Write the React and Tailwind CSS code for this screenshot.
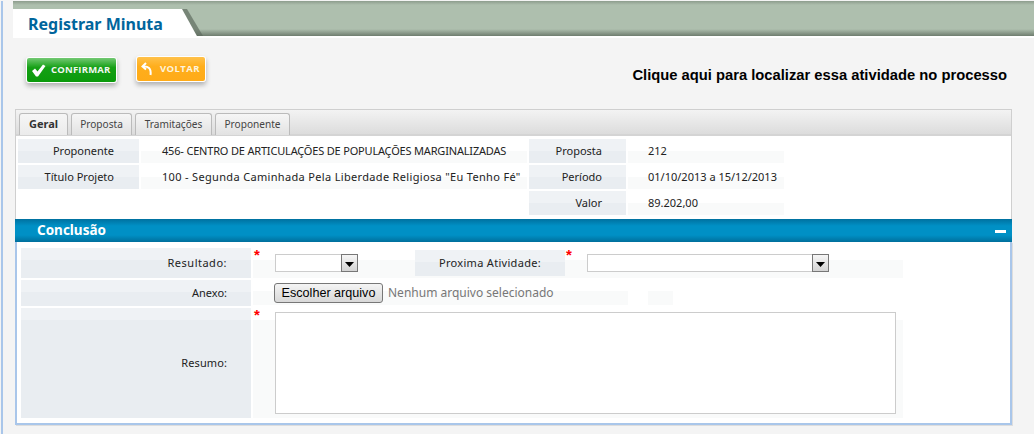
import React from 'react';

const FONT = "font-['Noto_Sans',sans-serif] text-[#222]";
const TEXT = `${FONT} text-[11px]`;
const LABEL_BG = 'bg-[linear-gradient(#eff2f5_12px,#e9edf1_12px)]';
const VALUE_BG = 'bg-[linear-gradient(#ffffff_12px,#f9fafa_12px)]';

const TABS = [
  { label: 'Geral', width: 'w-[49px]', active: true },
  { label: 'Proposta', width: 'w-[61px]' },
  { label: 'Tramitações', width: 'w-[77px]' },
  { label: 'Proponente', width: 'w-[75px]' },
];

function InfoRow({ label, value, valueClass, label2, value2, empty }) {
  return (
    <div className={`flex gap-[2px] h-[24px] ${TEXT}`}>
      <div className={`w-[121px] pr-[25px] flex items-center justify-end ${empty ? '' : LABEL_BG}`}>{label}</div>
      <div className={`w-[386px] pl-[21px] flex items-center ${valueClass || ''} ${empty ? '' : VALUE_BG}`}>{value}</div>
      <div className={`w-[97px] pr-[24px] flex items-center justify-end ${LABEL_BG}`}>{label2}</div>
      <div className={`w-[156px] pl-[20px] flex items-center ${VALUE_BG}`}>{value2}</div>
    </div>
  );
}

function Star() {
  return <span className="font-['Liberation_Sans',sans-serif] text-[15px] leading-[14px] font-bold text-[#f00]">*</span>;
}

function SelectBox({ width }) {
  return (
    <div className={`${width} h-[18px] mt-[6px] flex justify-end bg-white border border-[#ccc]`}>
      <div className="w-[17px] h-[18px] -mt-[1px] -mr-[1px] flex items-center justify-center bg-[linear-gradient(#f6f6f6,#d4d4d4)] border border-[#777]">
        <svg width="9" height="5" viewBox="0 0 9 5" className="mt-[3px]"><path d="M0 0h9L4.5 5z" fill="#000" /></svg>
      </div>
    </div>
  );
}

export default function App() {
  return (
    <div className="w-[1034px] h-[434px] overflow-hidden bg-[#f4f4f4] pl-[1px]">
      <div className="h-full border-l-2 border-[#a9c6ea] pl-[10px]">
        {/* Title bar */}
        <div className="relative mt-[1px] h-[35px] bg-[linear-gradient(#8d9d8d_0px,#aebfae_4px,#aebfae_28px,#6f7d6f_35px)]">
          <div className="absolute left-0 top-[8px] w-[190px] h-[29px] bg-[#5f6c5f] opacity-70 [clip-path:polygon(0_0,174px_0,190px_27px,0_27px)]" />
          <div className="absolute left-0 top-[8px] w-[186px] h-[29px] pl-[15px] pt-[4px] bg-white [clip-path:polygon(0_0,169px_0,185px_29px,0_29px)] font-['Noto_Sans',sans-serif] text-[16px] leading-[22px] font-bold text-[#00659c]">
            Registrar Minuta
          </div>
        </div>
        <div className="h-[2px] bg-white" />

        {/* Actions */}
        <div className="flex items-start h-[71px] pl-[13px] pt-[18px]">
          <button className="w-[91px] h-[26px] mt-[1px] pl-[4px] flex items-center gap-[5px] rounded-[3px] border border-white bg-[linear-gradient(#74c974,#15a015_40%,#0b9a0b)] shadow-[0_3px_5px_rgba(0,0,0,0.28)] font-['Open_Sans',sans-serif] text-[9.5px] font-bold tracking-[0.2px] text-[#f2f7f2]">
            <svg width="15" height="13" viewBox="0 0 15 13"><path d="M1 7l3-2.5 2.5 3L12 0.5l2.5 1.5L7 12.5H5z" fill="#fff" /></svg>
            CONFIRMAR
          </button>
          <button className="w-[70px] h-[26px] ml-[19px] pl-[4px] flex items-center gap-[7px] rounded-[3px] border border-white bg-[linear-gradient(#ffc14a,#ffae1c_40%,#ffab18)] shadow-[0_3px_5px_rgba(0,0,0,0.28)] font-['Open_Sans',sans-serif] text-[9.5px] font-bold tracking-[0.4px] text-[#fdf3dc]">
            <svg width="12" height="14" viewBox="0 0 12 14" fill="none" stroke="#fff" strokeWidth="2">
              <path d="M5 1L1.5 4.5 5 7.5" />
              <path d="M2 4.5C7 4 10.5 6 9.5 13" />
            </svg>
            VOLTAR
          </button>
          <a className="ml-auto mr-[27px] mt-[11px] font-['Liberation_Sans',sans-serif] text-[14.75px] leading-[17px] font-bold text-black">
            Clique aqui para localizar essa atividade no processo
          </a>
        </div>

        {/* Panel */}
        <div className="ml-[2px] w-[997px] h-[316px] flex flex-col">
          <div className="border-x border-t border-[#cfcfcf] bg-white">
            <div className="h-[26px] pl-[3px] pt-[3px] flex gap-[3px] bg-[linear-gradient(#f3f3f3,#dcdcdc)] border-b-2 border-[#d4d4d4]">
              {TABS.map((t) => (
                <div
                  key={t.label}
                  className={`${t.width} h-[22px] flex items-center justify-center rounded-t-[3px] border border-b-0 border-[#bbb] font-['Noto_Sans',sans-serif] ${
                    t.active ? 'text-[11px] font-bold text-[#333] bg-[linear-gradient(#f6f6f6,#ebebeb)]' : 'text-[10.1px] text-[#444] bg-[linear-gradient(#f6f6f6,#e2e2e2)]'
                  }`}
                >
                  {t.label}
                </div>
              ))}
            </div>
            <div className="pl-[2px] pt-[3px] pb-[4px] flex flex-col gap-[2px]">
              <InfoRow label="Proponente" value="456- CENTRO DE ARTICULAÇÕES DE POPULAÇÕES MARGINALIZADAS" valueClass="tracking-[-0.18px]" label2="Proposta" value2="212" />
              <InfoRow label="Título Projeto" value={'100 - Segunda Caminhada Pela Liberdade Religiosa "Eu Tenho Fé"'} valueClass="tracking-[0.33px]" label2="Período" value2="01/10/2013 a 15/12/2013" />
              <InfoRow empty label2="Valor" value2="89.202,00" />
            </div>
          </div>

          {/* Section header */}
          <div className="h-[23px] pl-[22px] pr-[6px] flex items-center justify-between bg-[linear-gradient(#00719f,#0090c5_30%,#0090c5_70%,#006f9c)]">
            <span className="font-['Noto_Sans',sans-serif] text-[13.5px] font-bold text-white">Conclusão</span>
            <span className="w-[11px] h-[3px] mt-[2px] bg-white" />
          </div>

          {/* Form */}
          <div className={`flex-1 border-x-2 border-b-2 border-[#a9c6ea] shadow-[1px_1px_0_#dddddd] bg-white pl-[4px] pt-[6px] flex flex-col gap-[2px] ${TEXT}`}>
            <div className="flex gap-[2px] h-[30px]">
              <div className={`w-[230px] pr-[24px] flex items-center justify-end tracking-[0.5px] ${LABEL_BG}`}>Resultado:</div>
              <div className={`w-[650px] flex ${VALUE_BG}`}>
                <span className="w-[22px] pl-[1px]"><Star /></span>
                <SelectBox width="w-[83px]" />
                <div className={`w-[150px] h-[26px] mt-[2px] ml-[57px] flex items-center justify-center tracking-[0.3px] ${LABEL_BG}`}>Proxima Atividade:</div>
                <span className="w-[22px] pl-[1px]"><Star /></span>
                <SelectBox width="w-[242px]" />
              </div>
            </div>
            <div className="flex gap-[2px] h-[26px]">
              <div className={`w-[230px] pr-[24px] flex items-center justify-end ${LABEL_BG}`}>Anexo:</div>
              <div className="w-[650px] pl-[21px] pt-[3px] flex items-start bg-[linear-gradient(90deg,#f9fafa_375px,transparent_375px,transparent_395px,#f9fafa_395px,#f9fafa_420px,transparent_420px)] bg-no-repeat bg-[length:100%_14px] bg-[position:0_11px]">
                <button className="w-[109px] h-[20px] rounded-[3px] border border-[#777] bg-[linear-gradient(#f4f4f4,#d8d8d8)] font-['Liberation_Sans',sans-serif] text-[12.6px] leading-[16px] text-black">
                  Escolher arquivo
                </button>
                <span className="ml-[5px] mt-[1px] text-[12px] leading-[18px] text-[#777]">Nenhum arquivo selecionado</span>
              </div>
            </div>
            <div className="flex gap-[2px] h-[110px]">
              <div className={`w-[230px] pr-[24px] flex items-center justify-end tracking-[0.1px] ${LABEL_BG}`}>Resumo:</div>
              <div className={`w-[650px] flex ${VALUE_BG}`}>
                <span className="w-[22px] pl-[1px]"><Star /></span>
                <textarea className="w-[621px] h-[102px] mt-[4px] bg-white border border-[#ccc] resize-none" />
              </div>
            </div>
          </div>
        </div>
      </div>
    </div>
  );
}
